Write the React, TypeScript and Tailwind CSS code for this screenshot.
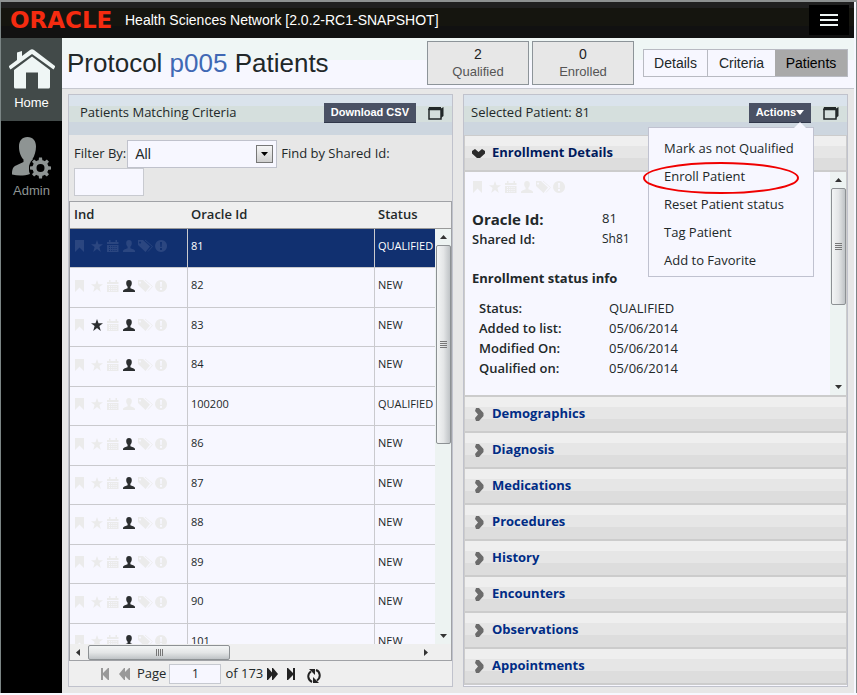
import type { ReactNode } from "react";

type Patient = {
  id: string;
  status: string;
  starred?: boolean;
  assigned?: boolean;
};

const patients: Patient[] = [
  { id: "81", status: "QUALIFIED" },
  { id: "82", status: "NEW", assigned: true },
  { id: "83", status: "NEW", assigned: true, starred: true },
  { id: "84", status: "NEW", assigned: true },
  { id: "100200", status: "QUALIFIED" },
  { id: "86", status: "NEW", assigned: true },
  { id: "87", status: "NEW", assigned: true },
  { id: "88", status: "NEW", assigned: true },
  { id: "89", status: "NEW", assigned: true },
  { id: "90", status: "NEW", assigned: true },
  { id: "101", status: "NEW", assigned: true },
];

const sections = [
  "Demographics",
  "Diagnosis",
  "Medications",
  "Procedures",
  "History",
  "Encounters",
  "Observations",
  "Appointments",
];

const actions = [
  "Mark as not Qualified",
  "Enroll Patient",
  "Reset Patient status",
  "Tag Patient",
  "Add to Favorite",
];

const statusInfo = [
  ["Status:", "QUALIFIED"],
  ["Added to list:", "05/06/2014"],
  ["Modified On:", "05/06/2014"],
  ["Qualified on:", "05/06/2014"],
];

function Glyph({ active, children }: { active?: boolean; children: ReactNode }) {
  return (
    <svg
      viewBox="0 0 12 12"
      className={active ? "size-3 overflow-visible text-[#2b2e30]" : "size-3 overflow-visible"}
      fill="currentColor"
      fillRule="evenodd"
      aria-hidden="true"
    >
      {children}
    </svg>
  );
}

function Indicators({ faded, starred, assigned }: { faded: string; starred?: boolean; assigned?: boolean }) {
  return (
    <div className={`flex gap-1 ${faded}`}>
      <Glyph>
        <path d="M0 0h9v12L4.500 7.500 0 12z" />
      </Glyph>
      <Glyph active={starred}>
        <path d="M6 0l1.500 4.200H12L8.400 7l1.400 5L6 9 2.200 12l1.400-5L0 4.200h4.500z" />
      </Glyph>
      <Glyph>
        <path d="M0 2h2V0h1.500v2h5V0H10v2h1.500v2H0zM0 5h11.500v7H0zM2 6v1h1V6zm2.200 0v1h1V6zm2.200 0v1h1V6zm2.200 0v1h1V6zM2 8v1h1V8zm2.200 0v1h1V8zm2.200 0v1h1V8zm2.200 0v1h1V8zM2 10v1h1v-1zm2.200 0v1h1v-1zm2.200 0v1h1v-1zm2.200 0v1h1v-1z" />
      </Glyph>
      <Glyph active={assigned}>
        <path d="M6 0C4.200 0 3.200 1.200 3.200 3c0 1.600.6 2.900 1.400 3.700v1.500L1.300 9.500C.4 9.900 0 10.400 0 11v1h12v-1c0-.6-.4-1.100-1.300-1.500L7.400 8.200V6.700C8.200 5.900 8.800 4.600 8.800 3 8.800 1.200 7.800 0 6 0z" />
      </Glyph>
      <Glyph>
        <path d="M-1 0h5l7 6.500L6.500 12-1 5zM1 1.500a1 1 0 1 0 .1 0z" />
        <path d="M6 0l7.500 6.500L9 11.500" fill="none" stroke="currentColor" strokeWidth=".8" />
      </Glyph>
      <Glyph>
        <path d="M6 0a6 6 0 1 0 .1 0zM5 2h2l-.4 5H5.400zM5 8h2v2H5z" />
      </Glyph>
    </div>
  );
}

function WindowIcon() {
  return (
    <svg viewBox="0 0 17 15" className="h-[15px] w-[17px]" aria-hidden="true">
      <path d="M1 3.500h12v9.500H1z" fill="none" stroke="#222829" strokeWidth="1.500" />
      <path d="M1 1h12v3H0z" fill="#222829" />
      <path d="M13 2.500 15.500 1v9L13 12z" fill="#222829" />
    </svg>
  );
}

function Chevron() {
  return (
    <svg viewBox="0 0 9 13" className="h-[13px] w-[9px]" aria-hidden="true">
      <path d="M1 0h3l4.500 5v3L4 13H1L0 10l3-3.500L0 3z" fill="#6b6b6b" />
    </svg>
  );
}

function Grip({ vertical }: { vertical?: boolean }) {
  return (
    <div className={vertical ? "flex flex-col gap-px" : "flex gap-px"}>
      {[0, 1, 2, 3].map((n) => (
        <span key={n} className={vertical ? "h-px w-[7px] bg-[#777]" : "h-[7px] w-px bg-[#777]"} />
      ))}
    </div>
  );
}

function VerticalScroll({ thumb }: { thumb: string }) {
  return (
    <div className="flex w-4 flex-1 shrink-0 flex-col items-center justify-between bg-[#edf3f2] py-[6px]" aria-hidden="true">
      <div className="flex flex-col items-center gap-[6px]">
        <svg viewBox="0 0 7 4" className="h-1 w-[7px]">
          <path d="M0 4 3.500 0 7 4z" fill="#333" />
        </svg>
        <div
          className={`flex w-[15px] items-center justify-center rounded-xs border border-[#8d9194] bg-linear-to-r from-[#f3f5f5] via-[#e4e6e7] to-[#bfc3c6] ${thumb}`}
        >
          <Grip vertical />
        </div>
      </div>
      <svg viewBox="0 0 7 4" className="h-1 w-[7px]">
        <path d="M0 0h7L3.500 4z" fill="#333" />
      </svg>
    </div>
  );
}

function PanelHeader({ title, inset, children }: { title: string; inset: string; children: ReactNode }) {
  return (
    <header
      className={`flex h-10 items-center justify-between bg-[linear-gradient(#dae3ec_0_11px,#d5dfdd_11px_27px,#cdd6df_27px)] pr-[7px] pb-1 ${inset}`}
    >
      <h2 className="text-[13px]">{title}</h2>
      <div className="flex items-center gap-3">
        {children}
        <WindowIcon />
      </div>
    </header>
  );
}

function PatientTable() {
  return (
    <div className="border border-[#a0a2a6] bg-[#f7f7ff]">
      <div className="flex h-[442px]">
        <div className="min-w-0 flex-1 overflow-hidden">
          <table className="w-full table-fixed border-separate border-spacing-0 text-left text-[11px]">
            <thead className="bg-[#efefef] text-[13px]">
              <tr className="h-[27px]">
                <th className="w-[118px] border-b border-[#999] pl-1 font-semibold">Ind</th>
                <th className="border-b border-[#999] pl-[3px] font-semibold">Oracle Id</th>
                <th className="w-[60px] border-b border-[#999] pl-[3px] font-semibold">Status</th>
              </tr>
            </thead>
            <tbody>
              {patients.map((patient, index) => (
                <tr
                  key={patient.id}
                  className={index === 0 ? "h-[39px] bg-[#113070] text-white" : "odd:h-[39px] even:h-10"}
                >
                  <td className="border-r border-b border-[#cacace] pb-1 pl-[5px]">
                    <Indicators
                      faded={index === 0 ? "text-[#2b4680]" : "text-[#ebebeb]"}
                      starred={patient.starred}
                      assigned={patient.assigned}
                    />
                  </td>
                  <td className="border-r border-b border-[#cacace] pb-1 pl-[3px]">{patient.id}</td>
                  <td className="border-b border-[#cacace] pb-1 pl-[3px]">{patient.status}</td>
                </tr>
              ))}
            </tbody>
          </table>
        </div>
        <div className="flex flex-col">
          <div className="h-[27px] border-b border-[#999] bg-[#efefef]" />
          <VerticalScroll thumb="h-[199px]" />
        </div>
      </div>
      <div className="flex h-4 items-center gap-2 bg-[#efefef] pr-[23px] pl-[6px]" aria-hidden="true">
        <svg viewBox="0 0 4 7" className="h-[7px] w-1">
          <path d="M4 0v7L0 3.500z" fill="#333" />
        </svg>
        <div className="flex h-[15px] w-[142px] items-center justify-center rounded-xs border border-[#8d9194] bg-linear-to-b from-[#f3f5f5] via-[#e4e6e7] to-[#bfc3c6]">
          <Grip />
        </div>
        <svg viewBox="0 0 4 7" className="ml-auto h-[7px] w-1">
          <path d="M0 0v7l4-3.500z" fill="#333" />
        </svg>
      </div>
    </div>
  );
}

function Pager() {
  return (
    <footer className="flex h-[25px] items-center bg-[#efefef] pl-8 text-[13px]">
      <button type="button" aria-label="First page" className="mr-[10px]">
        <svg viewBox="0 0 8 12" className="h-3 w-2" fill="#999">
          <path d="M0 0h2v5l5-5h1v12H7L2 7v5H0z" />
        </svg>
      </button>
      <button type="button" aria-label="Previous page" className="mr-[7px]">
        <svg viewBox="0 0 11 12" className="h-3 w-[11px]" fill="#999">
          <path d="M5 0h1v4l4-4h1v12h-1L6 8v4H5L0 6z" />
        </svg>
      </button>
      <label htmlFor="page">Page</label>
      <input
        id="page"
        defaultValue="1"
        className="mr-1 ml-[3px] h-5 w-[52px] border border-[#c6c9d0] bg-[#f7f7ff] text-center text-[12px]"
      />
      <span>of 173</span>
      <button type="button" aria-label="Next page" className="mr-[9px] ml-1">
        <svg viewBox="0 0 11 12" className="h-3 w-[11px]" fill="#222">
          <path d="M0 0h1l4 4.500V0h1l5 6-5 6H5V7.500L1 12H0z" />
        </svg>
      </button>
      <button type="button" aria-label="Last page" className="mr-3">
        <svg viewBox="0 0 8 12" className="h-3 w-2" fill="#222">
          <path d="M0 0h1l5 5V0h2v12H6V7l-5 5H0z" />
        </svg>
      </button>
      <button type="button" aria-label="Refresh">
        <svg viewBox="0 0 14 16" className="mt-1 h-4 w-[14px]" fill="none" stroke="#222" strokeWidth="2">
          <path d="M5 14C.5 12 0 6 4 3.500" />
          <path d="M9 2c4.500 1.500 5 8 1 10.500" />
          <path d="M2 1h6v6z" fill="#222" stroke="none" />
          <path d="M12 15H6V9z" fill="#222" stroke="none" />
        </svg>
      </button>
    </footer>
  );
}

function PatientList() {
  return (
    <section className="min-w-0 border border-[#c0c2cc]">
      <PanelHeader title="Patients Matching Criteria" inset="pl-[11px]">
        <button
          type="button"
          className="h-5 border-b border-[#30374a] bg-[#4a5164] px-[7px] font-[Liberation_Sans,sans-serif] text-[11px] leading-none font-bold text-white"
        >
          Download CSV
        </button>
      </PanelHeader>
      <div className="flex h-[66px] flex-wrap content-start items-center pt-[5px] pl-[5px] text-[13px]">
        <label htmlFor="filter">Filter By:</label>
        <div className="relative mr-1 ml-px">
          <select
            id="filter"
            className="h-7 w-[150px] appearance-none border border-[#c0c2cc] bg-[#f7f7ff] pl-[7px] font-[Liberation_Sans,sans-serif] text-[14px]"
          >
            <option>All</option>
          </select>
          <span className="pointer-events-none absolute top-[5px] right-1 flex h-[18px] w-[17px] items-center justify-center border border-[#777] bg-linear-to-b from-[#f5f5f5] to-[#cfcfcf]">
            <svg viewBox="0 0 7 4" className="h-1 w-[7px]">
              <path d="M0 0h7L3.500 4z" />
            </svg>
          </span>
        </div>
        <label htmlFor="shared">Find by Shared Id:</label>
        <input id="shared" className="h-7 w-[70px] border border-[#c8cad0] bg-[#f7f7ff] px-1" />
      </div>
      <PatientTable />
      <Pager />
    </section>
  );
}

function ActionsMenu() {
  return (
    <div className="relative z-10">
      <button
        type="button"
        className="flex h-5 items-center border-b border-[#30374a] bg-[#4a5164] px-[7px] font-[Liberation_Sans,sans-serif] text-[11px] leading-none font-bold text-white"
      >
        Actions
        <svg viewBox="0 0 8 5" className="h-[5px] w-2" fill="#fff">
          <path d="M0 0h8L4 5z" />
        </svg>
      </button>
      <div className="absolute top-6 -right-[3px] w-[166px] border border-[#c0c2d0] bg-[#f7f7ff] pt-[6px] pb-[2px]">
        <svg viewBox="0 0 12 6" className="absolute -top-[6px] right-[7px] h-[6px] w-3">
          <path d="M0 6 6 0l6 6z" fill="#f7f7ff" />
        </svg>
        <ul className="text-[13px] leading-7">
          {actions.map((action) => (
            <li key={action}>
              <button type="button" className="w-full pl-[15px] text-left whitespace-nowrap">
                {action}
              </button>
            </li>
          ))}
        </ul>
        <svg viewBox="0 0 156 32" className="pointer-events-none absolute top-[34px] -left-[6px] h-8 w-[156px]">
          <ellipse cx="78" cy="16" rx="77" ry="15" fill="none" stroke="#f00000" strokeWidth="2" />
        </svg>
      </div>
    </div>
  );
}

function PatientDetails() {
  return (
    <section className="min-w-0 border border-[#c0c2cc] bg-[#f7f7ff]">
      <PanelHeader title="Selected Patient: 81" inset="pl-[7px]">
        <ActionsMenu />
      </PanelHeader>
      <div className="border-x border-t border-[#ccc]">
        <button
          type="button"
          className="flex h-9 w-full items-center gap-[7px] border-b-2 border-[#ccc] bg-[linear-gradient(#efefef_0_10px,#e6e6e6_10px_22px,#ddd_22px)] pl-[7px] text-[13px] font-bold text-[#001a5c]"
        >
          <svg viewBox="0 0 13 9" className="h-[9px] w-[13px]">
            <path d="M3 0l3.500 3L10 0l3 2v2.500L8 9H5L0 4.500V2z" fill="#2b2b2b" />
          </svg>
          Enrollment Details
        </button>
        <div className="flex h-[223px]">
          <div className="flex-1 pt-[9px] pl-2 text-[13px]">
            <Indicators faded="text-[#ebebeb]" />
            <dl className="-ml-px mt-[15px] grid grid-cols-[130px_1fr] items-center">
              <dt className="text-[15px] leading-[22px] font-bold">Oracle Id:</dt>
              <dd>81</dd>
              <dt className="leading-[18px] font-semibold">Shared Id:</dt>
              <dd className="text-[12px]">Sh81</dd>
            </dl>
            <h3 className="-ml-px mt-5 leading-5 font-bold">Enrollment status info</h3>
            <dl className="mt-[10px] grid grid-cols-[130px_1fr] pl-[6px] leading-5">
              {statusInfo.map(([label, value]) => (
                <div key={label} className="contents">
                  <dt className="font-semibold">{label}</dt>
                  <dd>{value}</dd>
                </div>
              ))}
            </dl>
          </div>
          <div className="flex flex-col">
            <VerticalScroll thumb="h-[117px]" />
          </div>
        </div>
        <div className="border-t-2 border-[#ccc]">
          {sections.map((section) => (
            <button
              key={section}
              type="button"
              className="flex h-9 w-full items-center gap-2 border-b-2 border-[#ccc] bg-[linear-gradient(#efefef_0_10px,#e6e6e6_10px_22px,#ddd_22px)] pl-[10px] text-[13px] font-bold text-[#002c85]"
            >
              <Chevron />
              {section}
            </button>
          ))}
        </div>
      </div>
    </section>
  );
}

const gearTeeth = [0, 45, 90, 135, 180, 225, 270, 315];

function Sidebar() {
  return (
    <nav className="w-[61px] shrink-0 bg-black text-center font-[Liberation_Sans,sans-serif] text-[13px]">
      <a href="#home" className="flex h-[83px] flex-col items-center bg-[#424a49] pt-[11px] text-white">
        <svg viewBox="0 0 46 40" className="h-10 w-[46px]" fill="#eff6f5">
          <path d="M21 1q2-1.500 4 0L46 17q.5 1-1.500 3.500L23 5 1.500 20.500Q-.5 18 0 17L8 11V3.500L13 2v5z" />
          <path d="M23 7.500 5 21v17q0 1.500 1.500 1.500H17v-16h12v16h10.500q1.500 0 1.500-1.500V21z" />
        </svg>
        <span className="mt-1">Home</span>
      </a>
      <a href="#admin" className="flex flex-col items-center pt-4 text-[#8e9493]">
        <svg viewBox="0 0 39 42" className="h-[42px] w-[39px]" fill="#8e9493">
          <path d="M15.500 0C10 0 7 4 7 9.500c0 6 2 10.500 4.500 13v2.500L4 28.500c-3 1.500-4 3.500-4 9C6 39 12 39 18 37c-2-5-1-10 4-14l-1.500-1C22.500 19 24 14 24 9.500c0-5.500-3-9.500-8.500-9.500z" />
          <circle cx="28.500" cy="31" r="11.500" fill="#000" />
          <circle cx="28.500" cy="31" r="6" fill="none" stroke="#8e9493" strokeWidth="4" />
          {gearTeeth.map((angle) => (
            <path key={angle} d="M26.500 24.500 27 20.500h3l.5 4z" transform={`rotate(${angle} 28.500 31)`} />
          ))}
        </svg>
        <span className="mt-[2px]">Admin</span>
      </a>
    </nav>
  );
}

function Counter({ value, label }: { value: number; label: string }) {
  return (
    <div className="flex h-11 w-[102px] flex-col items-center justify-center border border-[#8d9499] bg-[#e7e7e7] text-[13px] leading-[18px] text-[#555]">
      <span className="text-[14px] text-[#222]">{value}</span>
      <span>{label}</span>
    </div>
  );
}

export default function App() {
  return (
    <div className="min-h-screen border-t-2 border-[#8d9191] bg-[#f7f8ff] pb-[2px] font-[Open_Sans,sans-serif] text-[#222829]">
      <div className="border-x border-[#7b8585] pr-[2px]">
        <header className="flex h-9 items-center bg-[linear-gradient(#202020_0_6px,#15150f_6px_24px,#111_24px)] pr-[5px] pl-[9px] font-[Liberation_Sans,sans-serif] text-white">
          <span className="w-[115px] font-[DejaVu_Sans,sans-serif] text-[23px] leading-none font-bold text-[#f52b10]">
            ORACLE
          </span>
          <span className="text-[14px]">Health Sciences Network [2.0.2-RC1-SNAPSHOT]</span>
          <button type="button" aria-label="Menu" className="ml-auto flex h-[30px] w-10 items-center justify-center bg-black">
            <svg viewBox="0 0 18 12" className="h-3 w-[18px]" fill="#eff6f5">
              <path d="M0 0h18v2H0zM0 5h18v2H0zM0 10h18v2H0z" />
            </svg>
          </button>
        </header>
        <div className="flex">
          <Sidebar />
          <main className="min-w-0 flex-1 bg-[#e7e7e7]">
            <div className="flex h-[51px] items-center border-b border-[#c6c8d0] bg-[linear-gradient(#eff6f5_0_22px,#f7f7ff_22px)] pr-[6px] pl-[5px] font-[Liberation_Sans,sans-serif]">
              <h1 className="text-[26px] leading-none whitespace-nowrap">
                Protocol <span className="text-[#4068b4]">p005</span> Patients
              </h1>
              <div className="ml-auto flex gap-[3px]">
                <Counter value={2} label="Qualified" />
                <Counter value={0} label="Enrolled" />
              </div>
              <div className="ml-[9px] flex h-7 border border-[#b8bac2] bg-[#f7f7ff] text-[14px]">
                <button type="button" className="w-16 border-r border-[#b8bac2]">Details</button>
                <button type="button" className="w-[67px]">Criteria</button>
                <button type="button" className="w-[72px] bg-[#a9a9a9] text-black">Patients</button>
              </div>
            </div>
            <div className="grid grid-cols-2 gap-[10px] px-[6px] pt-[5px] pb-[6px]">
              <PatientList />
              <PatientDetails />
            </div>
          </main>
        </div>
      </div>
    </div>
  );
}
